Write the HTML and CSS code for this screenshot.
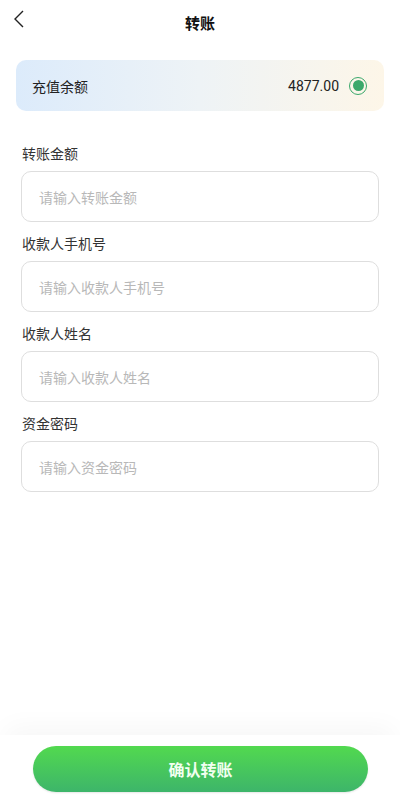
FILE: index.html
```html
<!DOCTYPE html>
<html>
    <head>
        <meta charset="utf-8">
        <title>转账</title>
        <link rel="stylesheet" href="styles.css">
    </head>
    <body>
        <div class="header">
            <svg class="back" width="12" height="18" viewBox="0 0 12 18"><path d="M10 1 L2 9 L10 17" fill="none" stroke="#222" stroke-width="1.4"/></svg>
            <div class="title">转账</div>
        </div>
        <div class="balance">
            <span class="balance-name">充值余额</span>
            <span class="balance-right">
                <span class="balance-num">4877.00</span>
                <span class="radio"><span class="radio-dot"></span></span>
            </span>
        </div>
        <div class="form">
            <div class="label">转账金额</div>
            <input class="field" type="text" placeholder="请输入转账金额">
            <div class="label">收款人手机号</div>
            <input class="field" type="text" placeholder="请输入收款人手机号">
            <div class="label">收款人姓名</div>
            <input class="field" type="text" placeholder="请输入收款人姓名">
            <div class="label">资金密码</div>
            <input class="field" type="password" placeholder="请输入资金密码">
        </div>
        <div class="footer">
            <div class="btn-wrap">
                <button class="btn">确认转账</button>
            </div>
        </div>
    </body>
</html>
```

FILE: styles.css
```css
* {
    margin: 0;
    padding: 0;
    box-sizing: border-box;
    outline: none;
}
body {
    width: 400px;
    height: 800px;
    background: #fff;
    font-family: "Noto Sans CJK SC", "Noto Sans", sans-serif;
    color: #222;
    position: relative;
    overflow: hidden;
}
.header {
    height: 44px;
    display: flex;
    align-items: center;
    justify-content: center;
    position: relative;
}
.back {
    position: absolute;
    left: 13px;
    top: 10px;
}
.title {
    font-size: 15px;
    font-weight: bold;
    color: #111;
}
.balance {
    margin: 16px 16px 0;
    height: 51px;
    border-radius: 10px;
    background: linear-gradient(90deg, #dcebfb 0%, #eef3f6 50%, #fdf6e8 100%);
    display: flex;
    align-items: center;
    justify-content: space-between;
    padding: 0 17px 0 16px;
}
.balance-name {
    font-size: 14px;
    color: #222;
}
.balance-right {
    display: flex;
    align-items: center;
}
.balance-num {
    font-family: "Roboto", "Liberation Sans", sans-serif;
    font-size: 14px;
    color: #222;
}
.radio {
    width: 18px;
    height: 18px;
    border: 1.5px solid #3aa86b;
    border-radius: 50%;
    margin-left: 10px;
    display: flex;
    align-items: center;
    justify-content: center;
}
.radio-dot {
    width: 11px;
    height: 11px;
    border-radius: 50%;
    background: #3aa86b;
}
.form {
    padding: 32px 21px 0;
}
.label {
    font-size: 14px;
    line-height: 20px;
    color: #333;
    margin-bottom: 8px;
    padding-left: 1px;
}
.field {
    display: block;
    width: 358px;
    height: 51px;
    border: 1px solid #dedede;
    border-radius: 10px;
    padding: 0 17px;
    font-size: 14px;
    font-family: "Noto Sans CJK SC", "Noto Sans", sans-serif;
    color: #222;
    margin-bottom: 11px;
}
.field::placeholder {
    color: #b8b8b8;
}
.footer {
    position: absolute;
    left: 0;
    right: 0;
    bottom: 0;
}
.btn-wrap {
    background: #fff;
    height: 65px;
    padding: 11px 32px 0 33px;
    box-shadow: 0 -14px 26px -6px rgba(0,0,0,0.035);
}
.btn {
    width: 335px;
    height: 46px;
    border: none;
    border-radius: 23px;
    background: linear-gradient(180deg, #52d94f 0%, #3db56a 100%);
    color: #f2fff0;
    font-size: 16px;
    font-weight: bold;
    font-family: "Noto Sans CJK SC", "Noto Sans", sans-serif;
    box-shadow: 0 1px 2px rgba(0,0,0,0.1);
}
```
